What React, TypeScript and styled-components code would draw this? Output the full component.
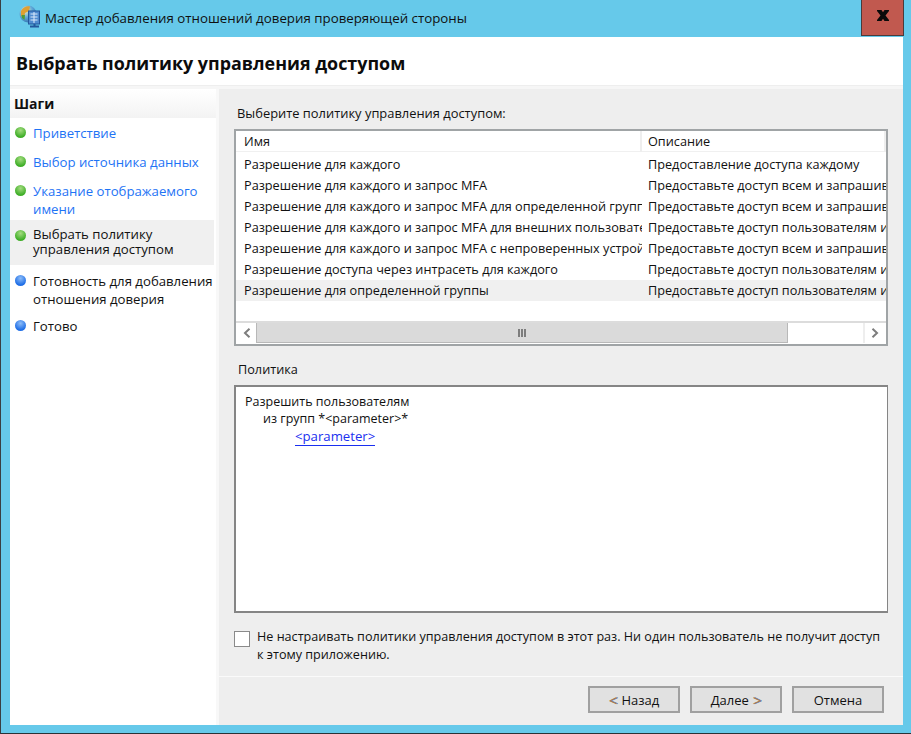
import React from "react";
import styled, { createGlobalStyle } from "styled-components";

const GlobalStyle = createGlobalStyle`
    html, body {
        margin: 0;
        padding: 0;
        background: #66c9ea;
    }
    * {
        box-sizing: border-box;
    }
`;

const steps = [
    { label: "Приветствие", state: "done", height: 29, top: 3, lh: 18 },
    { label: "Выбор источника данных", state: "done", height: 29, top: 3, lh: 18 },
    { label: "Указание отображаемого имени", state: "done", height: 41, top: 3, lh: 18 },
    { label: "Выбрать политику управления доступом", state: "current", height: 45, top: 7, lh: 15 },
    { label: "Готовность для добавления отношения доверия", state: "todo", height: 49, top: 7, lh: 18 },
    { label: "Готово", state: "todo", height: 29, top: 3, lh: 18 },
];

const policies = [
    ["Разрешение для каждого", "Предоставление доступа каждому"],
    ["Разрешение для каждого и запрос MFA", "Предоставьте доступ всем и запрашивайте MFA"],
    ["Разрешение для каждого и запрос MFA для определенной группы", "Предоставьте доступ всем и запрашивайте MFA"],
    ["Разрешение для каждого и запрос MFA для внешних пользователей", "Предоставьте доступ пользователям и запрашивайте"],
    ["Разрешение для каждого и запрос MFA с непроверенных устройств", "Предоставьте доступ всем и запрашивайте MFA"],
    ["Разрешение доступа через интрасеть для каждого", "Предоставьте доступ пользователям и устройствам"],
    ["Разрешение для определенной группы", "Предоставьте доступ пользователям и группам"],
];

const WizardIcon = () => (
    <svg width="22" height="24" viewBox="0 0 22 24">
        <defs>
            <radialGradient id="globe" cx="0.35" cy="0.3" r="0.8">
                <stop offset="0" stopColor="#f4f0c0" />
                <stop offset="0.5" stopColor="#5fa8d8" />
                <stop offset="1" stopColor="#2c6aa8" />
            </radialGradient>
        </defs>
        <circle cx="9" cy="9" r="8.5" fill="url(#globe)" />
        <path d="M2 6 C4 2 8 0.5 11 1.5 L10 6 L6 8 L5 13 L2 11 Z" fill="#dfa032" />
        <path d="M2.5 10 L6 10 L5.5 15 L3 13 Z" fill="#4f9c3a" />
        <rect x="9.5" y="6" width="11" height="13" fill="#4f8cd0" stroke="#23589c" />
        <path d="M11.5 9 H18.5 M11.5 12 H18.5 M11.5 15 H18.5 M15 7 V18" stroke="#dbeafa" strokeWidth="1" />
        <path d="M11 21.5 H20 M15.5 19 V21" stroke="#23589c" strokeWidth="2" />
    </svg>
);

const CloseGlyph = () => (
    <svg width="12" height="11" viewBox="0 0 12 11">
        <path d="M0 0 H4.5 L6 2.2 L7.5 0 H12 V1 L8.5 5.5 L12 10 V11 H7.5 L6 8.8 L4.5 11 H0 V10 L3.5 5.5 L0 1 Z" fill="#0a0a0a" />
    </svg>
);

const Chevron = ({ dir }: { dir: "left" | "right" }) => (
    <svg width="8" height="10" viewBox="0 0 8 10">
        <path d={dir === "left" ? "M6.5 0.8 L2 5 L6.5 9.2" : "M1.5 0.8 L6 5 L1.5 9.2"} fill="none" stroke="#7d7d7d" strokeWidth="2" />
    </svg>
);

export default function App() {
    return (
        <>
            <GlobalStyle />
            <Window>
                <TitleBar>
                    <TitleIcon><WizardIcon /></TitleIcon>
                    <TitleText>Мастер добавления отношений доверия проверяющей стороны</TitleText>
                    <CloseButton><CloseGlyph /></CloseButton>
                </TitleBar>
                <Content>
                    <Header>Выбрать политику управления доступом</Header>
                    <Body>
                        <Sidebar>
                            <SidebarTitle>Шаги</SidebarTitle>
                            <StepList>
                                {steps.map((s) => (
                                    <Step key={s.label} $state={s.state} $height={s.height} $top={s.top}>
                                        <Bullet $state={s.state} />
                                        <StepLabel $lh={s.lh}>{s.label}</StepLabel>
                                    </Step>
                                ))}
                            </StepList>
                        </Sidebar>
                        <Main>
                            <MainInner>
                                <FieldLabel>Выберите политику управления доступом:</FieldLabel>
                                <ListBox>
                                    <ListHeader>
                                        <HeaderCell>Имя</HeaderCell>
                                        <HeaderCell $second>Описание</HeaderCell>
                                    </ListHeader>
                                    <ListRows>
                                        {policies.map((p, i) => (
                                            <ListRow key={p[0]} $selected={i === policies.length - 1}>
                                                <NameCell>{p[0]}</NameCell>
                                                <DescCell>{p[1]}</DescCell>
                                            </ListRow>
                                        ))}
                                    </ListRows>
                                    <ScrollBar>
                                        <ScrollButton><Chevron dir="left" /></ScrollButton>
                                        <ScrollThumb>
                                            <Grip><i /><i /><i /></Grip>
                                        </ScrollThumb>
                                        <ScrollTrack />
                                        <ScrollButton><Chevron dir="right" /></ScrollButton>
                                    </ScrollBar>
                                </ListBox>
                                <PolicyLabel>Политика</PolicyLabel>
                                <PolicyBox>
                                    <PolicyLine>Разрешить пользователям</PolicyLine>
                                    <PolicyLine $indent={18}>из групп *&lt;parameter&gt;*</PolicyLine>
                                    <PolicyLink href="#">&lt;parameter&gt;</PolicyLink>
                                </PolicyBox>
                                <CheckRow>
                                    <CheckBox />
                                    <CheckText>
                                        Не настраивать политики управления доступом в этот раз. Ни один пользователь не получит доступ к этому приложению.
                                    </CheckText>
                                </CheckRow>
                            </MainInner>
                            <Footer>
                                <Button><Arrow>&lt;</Arrow> Назад</Button>
                                <Button>Далее <Arrow>&gt;</Arrow></Button>
                                <Button>Отмена</Button>
                            </Footer>
                        </Main>
                    </Body>
                </Content>
            </Window>
        </>
    );
}

const uiFont = `"Open Sans", "Noto Sans", sans-serif`;

const Window = styled.div`
    width: 911px;
    height: 734px;
    display: flex;
    flex-direction: column;
    background: #66c9ea;
    border-left: 1px solid #3a3f42;
    border-bottom: 1px solid #2a3236;
    padding: 0 8px 8px 9px;
    font-family: ${uiFont};
    font-size: 13px;
    color: #111;
    overflow: hidden;
`;

const TitleBar = styled.div`
    height: 37px;
    flex: none;
    display: flex;
    align-items: flex-start;
    position: relative;
`;

const TitleIcon = styled.div`
    margin: 5px 0 0 9px;
    width: 26px;
`;

const TitleText = styled.div`
    margin-top: 8px;
    font-size: 13.3px;
    line-height: 20px;
    color: #101010;
`;

const CloseButton = styled.div`
    position: absolute;
    top: 0;
    right: -1px;
    width: 43px;
    height: 36px;
    background: #c1594f;
    border: 1px solid #4b3a3a;
    border-top: none;
    display: flex;
    align-items: center;
    justify-content: center;
    padding-bottom: 5px;
`;

const Content = styled.div`
    flex: 1;
    min-height: 0;
    display: flex;
    flex-direction: column;
    background: #fff;
`;

const Header = styled.div`
    height: 49px;
    flex: none;
    padding: 14px 0 0 6px;
    font-size: 17.9px;
    line-height: 24px;
    font-weight: 700;
    color: #0c0c0c;
    border-bottom: 1px solid #eeeeee;
`;

const Body = styled.div`
    flex: 1;
    min-height: 0;
    display: flex;
    background: #f8f8f8;
    border-top: 3px solid #f6f6f6;
`;

const Sidebar = styled.div`
    width: 206px;
    flex: none;
    background: #fff;
    padding-top: 1px;
`;

const SidebarTitle = styled.div`
    height: 28px;
    padding: 4px 0 0 4px;
    font-size: 14px;
    line-height: 20px;
    font-weight: 700;
    color: #111;
    background: linear-gradient(#ffffff, #f3f3f3);
`;

const StepList = styled.div`
    display: flex;
    flex-direction: column;
    padding-top: 3px;
`;

const Step = styled.div<{ $state: string; $height: number; $top: number }>`
    display: flex;
    align-items: flex-start;
    height: ${(p) => p.$height}px;
    padding: ${(p) => p.$top}px 0 0 5px;
    margin-right: 2px;
    background: ${(p) => (p.$state === "current" ? "#f0f0f0" : "transparent")};
    color: ${(p) => (p.$state === "done" ? "#1e73f5" : "#111")};
`;

const Bullet = styled.span<{ $state: string }>`
    flex: none;
    width: 11px;
    height: 11px;
    margin: 3px 7px 0 0;
    border-radius: 50%;
    background: ${(p) =>
        p.$state === "todo"
            ? "radial-gradient(circle at 50% 30%, #8cbcf8, #1f6ee6 70%)"
            : "radial-gradient(circle at 50% 30%, #a4dc80, #3fae28 70%)"};
`;

const StepLabel = styled.span<{ $lh: number }>`
    line-height: ${(p) => p.$lh}px;
    font-size: 13.2px;
`;

const Main = styled.div`
    flex: 1;
    min-width: 0;
    margin-left: 3px;
    display: flex;
    flex-direction: column;
    background: #eeeeee;
`;

const MainInner = styled.div`
    flex: 1;
    min-height: 0;
    padding: 14px 15px 0 15px;
    border-bottom: 1px solid #fafafa;
`;

const FieldLabel = styled.div`
    height: 26px;
    padding-left: 3px;
    line-height: 20px;
    font-size: 12.9px;
`;

const ListBox = styled.div`
    width: 654px;
    height: 217px;
    display: flex;
    flex-direction: column;
    background: #fff;
    border: 2px solid #a0a4a6;
`;

const ListHeader = styled.div`
    height: 21px;
    flex: none;
    display: grid;
    grid-template-columns: 406px 1fr;
    border-bottom: 1px solid #f0f0f0;
`;

const HeaderCell = styled.div<{ $second?: boolean }>`
    padding-left: ${(p) => (p.$second ? 6 : 8)}px;
    line-height: 21px;
    font-size: 12.7px;
    border-right: 2px solid #eeeeee;
`;

const ListRows = styled.div`
    flex: 1;
    min-height: 0;
    padding-top: 1.5px;
    overflow: hidden;
`;

const ListRow = styled.div<{ $selected: boolean }>`
    height: 21.1px;
    display: grid;
    grid-template-columns: 406px 1fr;
    background: ${(p) => (p.$selected ? "#f0f0f0" : "transparent")};
`;

const NameCell = styled.div`
    padding-left: 8px;
    line-height: 21px;
    font-size: 12.7px;
    white-space: nowrap;
    overflow: hidden;
`;

const DescCell = styled(NameCell)`
    padding-left: 6px;
`;

const ScrollBar = styled.div`
    height: 23px;
    flex: none;
    display: flex;
    align-items: stretch;
    border-top: 2px solid #dcdcdc;
    background: #fff;
    padding: 0 2px 1px 1px;
`;

const ScrollButton = styled.div`
    width: 19px;
    flex: none;
    display: flex;
    align-items: center;
    justify-content: center;
`;

const ScrollThumb = styled.div`
    width: 532px;
    flex: none;
    background: #dadada;
    border: 1px solid #b8b8b8;
    border-top: none;
    display: flex;
    align-items: center;
    justify-content: center;
`;

const Grip = styled.div`
    display: flex;
    gap: 1px;
    i {
        display: block;
        width: 2px;
        height: 8px;
        background: #7d7d7d;
    }
`;

const ScrollTrack = styled.div`
    flex: 1;
    border-right: 2px solid #eeeeee;
`;

const PolicyLabel = styled.div`
    height: 26px;
    margin-top: 13px;
    padding-left: 4px;
    line-height: 20px;
    font-size: 12.7px;
`;

const PolicyBox = styled.div`
    width: 654px;
    height: 228px;
    padding: 6px 0 0 9px;
    background: #fff;
    border: 2px solid #858585;
    border-width: 2px 1px 2px 2px;
`;

const PolicyLine = styled.div<{ $indent?: number }>`
    height: 17px;
    line-height: 17px;
    font-size: 12.5px;
    margin-left: ${(p) => p.$indent ?? 0}px;
`;

const PolicyLink = styled.a`
    display: inline-block;
    height: 18px;
    margin-left: 50px;
    line-height: 17px;
    font-size: 13.2px;
    color: #1a2ff0;
    text-decoration: none;
    border-bottom: 1px solid #1a2ff0;
`;

const CheckRow = styled.div`
    display: flex;
    align-items: flex-start;
    margin-top: 15px;
`;

const CheckBox = styled.div`
    flex: none;
    width: 16px;
    height: 16px;
    margin: 3px 7px 0 0;
    background: #fff;
    border: 1px solid #8a8a8a;
`;

const CheckText = styled.div`
    width: 632px;
    line-height: 18px;
    font-size: 12.6px;
`;

const Footer = styled.div`
    height: 48px;
    flex: none;
    display: flex;
    justify-content: flex-end;
    align-items: flex-start;
    gap: 10px;
    padding: 9px 19px 0 0;
    background: #eeeeee;
`;

const Button = styled.div`
    width: 92px;
    height: 27px;
    display: flex;
    align-items: center;
    justify-content: center;
    gap: 4px;
    background: #e1e1e1;
    border: 2px solid #a0a0a0;
    font-size: 13px;
    color: #111;
`;

const Arrow = styled.span`
    font-size: 15px;
    line-height: 18px;
    color: #a87a4a;
    text-shadow: 1px 0 0 #4f72a0;
`;
